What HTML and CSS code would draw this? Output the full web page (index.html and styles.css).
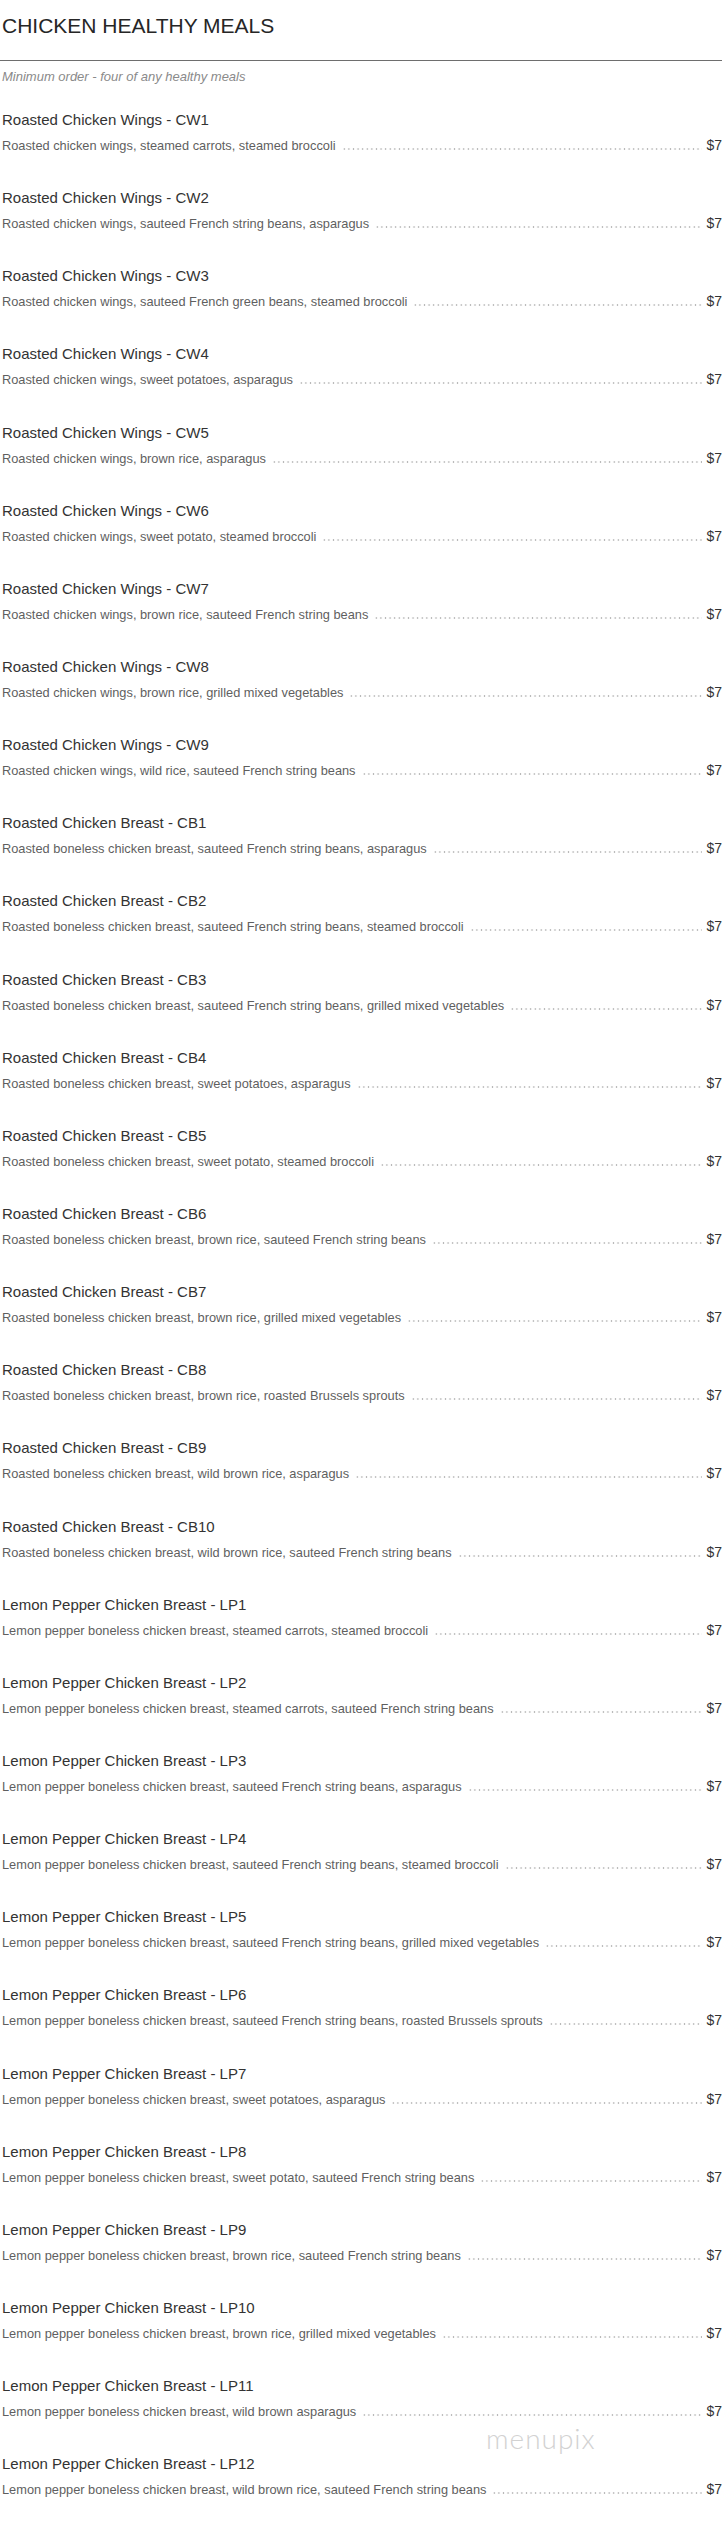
FILE: index.html
```html
<!DOCTYPE html>
<html>
<head>
<meta charset="utf-8">
<link rel="stylesheet" href="styles.css">
</head>
<body>
<div class="menu">
  <h1 class="menu-title">CHICKEN HEALTHY MEALS</h1>
  <hr class="rule">
  <p class="note">Minimum order - four of any healthy meals</p>
  <div class="items">
    <div class="item"><div class="name">Roasted Chicken Wings - CW1</div><div class="row"><span class="desc">Roasted chicken wings, steamed carrots, steamed broccoli</span><span class="dots"></span><span class="price">$7</span></div></div>
    <div class="item"><div class="name">Roasted Chicken Wings - CW2</div><div class="row"><span class="desc">Roasted chicken wings, sauteed French string beans, asparagus</span><span class="dots"></span><span class="price">$7</span></div></div>
    <div class="item"><div class="name">Roasted Chicken Wings - CW3</div><div class="row"><span class="desc">Roasted chicken wings, sauteed French green beans, steamed broccoli</span><span class="dots"></span><span class="price">$7</span></div></div>
    <div class="item"><div class="name">Roasted Chicken Wings - CW4</div><div class="row"><span class="desc">Roasted chicken wings, sweet potatoes, asparagus</span><span class="dots"></span><span class="price">$7</span></div></div>
    <div class="item"><div class="name">Roasted Chicken Wings - CW5</div><div class="row"><span class="desc">Roasted chicken wings, brown rice, asparagus</span><span class="dots"></span><span class="price">$7</span></div></div>
    <div class="item"><div class="name">Roasted Chicken Wings - CW6</div><div class="row"><span class="desc">Roasted chicken wings, sweet potato, steamed broccoli</span><span class="dots"></span><span class="price">$7</span></div></div>
    <div class="item"><div class="name">Roasted Chicken Wings - CW7</div><div class="row"><span class="desc">Roasted chicken wings, brown rice, sauteed French string beans</span><span class="dots"></span><span class="price">$7</span></div></div>
    <div class="item"><div class="name">Roasted Chicken Wings - CW8</div><div class="row"><span class="desc">Roasted chicken wings, brown rice, grilled mixed vegetables</span><span class="dots"></span><span class="price">$7</span></div></div>
    <div class="item"><div class="name">Roasted Chicken Wings - CW9</div><div class="row"><span class="desc">Roasted chicken wings, wild rice, sauteed French string beans</span><span class="dots"></span><span class="price">$7</span></div></div>
    <div class="item"><div class="name">Roasted Chicken Breast - CB1</div><div class="row"><span class="desc">Roasted boneless chicken breast, sauteed French string beans, asparagus</span><span class="dots"></span><span class="price">$7</span></div></div>
    <div class="item"><div class="name">Roasted Chicken Breast - CB2</div><div class="row"><span class="desc">Roasted boneless chicken breast, sauteed French string beans, steamed broccoli</span><span class="dots"></span><span class="price">$7</span></div></div>
    <div class="item"><div class="name">Roasted Chicken Breast - CB3</div><div class="row"><span class="desc">Roasted boneless chicken breast, sauteed French string beans, grilled mixed vegetables</span><span class="dots"></span><span class="price">$7</span></div></div>
    <div class="item"><div class="name">Roasted Chicken Breast - CB4</div><div class="row"><span class="desc">Roasted boneless chicken breast, sweet potatoes, asparagus</span><span class="dots"></span><span class="price">$7</span></div></div>
    <div class="item"><div class="name">Roasted Chicken Breast - CB5</div><div class="row"><span class="desc">Roasted boneless chicken breast, sweet potato, steamed broccoli</span><span class="dots"></span><span class="price">$7</span></div></div>
    <div class="item"><div class="name">Roasted Chicken Breast - CB6</div><div class="row"><span class="desc">Roasted boneless chicken breast, brown rice, sauteed French string beans</span><span class="dots"></span><span class="price">$7</span></div></div>
    <div class="item"><div class="name">Roasted Chicken Breast - CB7</div><div class="row"><span class="desc">Roasted boneless chicken breast, brown rice, grilled mixed vegetables</span><span class="dots"></span><span class="price">$7</span></div></div>
    <div class="item"><div class="name">Roasted Chicken Breast - CB8</div><div class="row"><span class="desc">Roasted boneless chicken breast, brown rice, roasted Brussels sprouts</span><span class="dots"></span><span class="price">$7</span></div></div>
    <div class="item"><div class="name">Roasted Chicken Breast - CB9</div><div class="row"><span class="desc">Roasted boneless chicken breast, wild brown rice, asparagus</span><span class="dots"></span><span class="price">$7</span></div></div>
    <div class="item"><div class="name">Roasted Chicken Breast - CB10</div><div class="row"><span class="desc">Roasted boneless chicken breast, wild brown rice, sauteed French string beans</span><span class="dots"></span><span class="price">$7</span></div></div>
    <div class="item"><div class="name">Lemon Pepper Chicken Breast - LP1</div><div class="row"><span class="desc">Lemon pepper boneless chicken breast, steamed carrots, steamed broccoli</span><span class="dots"></span><span class="price">$7</span></div></div>
    <div class="item"><div class="name">Lemon Pepper Chicken Breast - LP2</div><div class="row"><span class="desc">Lemon pepper boneless chicken breast, steamed carrots, sauteed French string beans</span><span class="dots"></span><span class="price">$7</span></div></div>
    <div class="item"><div class="name">Lemon Pepper Chicken Breast - LP3</div><div class="row"><span class="desc">Lemon pepper boneless chicken breast, sauteed French string beans, asparagus</span><span class="dots"></span><span class="price">$7</span></div></div>
    <div class="item"><div class="name">Lemon Pepper Chicken Breast - LP4</div><div class="row"><span class="desc">Lemon pepper boneless chicken breast, sauteed French string beans, steamed broccoli</span><span class="dots"></span><span class="price">$7</span></div></div>
    <div class="item"><div class="name">Lemon Pepper Chicken Breast - LP5</div><div class="row"><span class="desc">Lemon pepper boneless chicken breast, sauteed French string beans, grilled mixed vegetables</span><span class="dots"></span><span class="price">$7</span></div></div>
    <div class="item"><div class="name">Lemon Pepper Chicken Breast - LP6</div><div class="row"><span class="desc">Lemon pepper boneless chicken breast, sauteed French string beans, roasted Brussels sprouts</span><span class="dots"></span><span class="price">$7</span></div></div>
    <div class="item"><div class="name">Lemon Pepper Chicken Breast - LP7</div><div class="row"><span class="desc">Lemon pepper boneless chicken breast, sweet potatoes, asparagus</span><span class="dots"></span><span class="price">$7</span></div></div>
    <div class="item"><div class="name">Lemon Pepper Chicken Breast - LP8</div><div class="row"><span class="desc">Lemon pepper boneless chicken breast, sweet potato, sauteed French string beans</span><span class="dots"></span><span class="price">$7</span></div></div>
    <div class="item"><div class="name">Lemon Pepper Chicken Breast - LP9</div><div class="row"><span class="desc">Lemon pepper boneless chicken breast, brown rice, sauteed French string beans</span><span class="dots"></span><span class="price">$7</span></div></div>
    <div class="item"><div class="name">Lemon Pepper Chicken Breast - LP10</div><div class="row"><span class="desc">Lemon pepper boneless chicken breast, brown rice, grilled mixed vegetables</span><span class="dots"></span><span class="price">$7</span></div></div>
    <div class="item"><div class="name">Lemon Pepper Chicken Breast - LP11</div><div class="row"><span class="desc">Lemon pepper boneless chicken breast, wild brown asparagus</span><span class="dots"></span><span class="price">$7</span></div></div>
    <div class="item"><div class="name">Lemon Pepper Chicken Breast - LP12</div><div class="row"><span class="desc">Lemon pepper boneless chicken breast, wild brown rice, sauteed French string beans</span><span class="dots"></span><span class="price">$7</span></div></div>
  </div>
  <div class="watermark">menupix</div>
</div>
</body>
</html>
```

FILE: styles.css
```css
html, body {
  margin: 0;
  padding: 0;
  background: #ffffff;
}

.menu {
  position: relative;
  font-family: "Liberation Sans", Arial, Helvetica, sans-serif;
  padding: 0 0 0 2px;
}

.menu-title {
  margin: 14px 0 0 0;
  font-size: 21px;
  line-height: 24px;
  font-weight: normal;
  color: #262626;
}

.rule {
  margin: 22px 0 0 -2px;
  border: 0;
  height: 1px;
  background: #6e6e6e;
}

.note {
  margin: 8px 0 0 0;
  font-size: 13px;
  line-height: 16px;
  font-style: italic;
  color: #8a8a8a;
}

.items {
  margin-top: 26px;
  display: flex;
  flex-direction: column;
}

.item {
  height: 43px;
  margin-bottom: 35.15px;
  overflow: visible;
}

.name {
  height: 18px;
  font-size: 15px;
  line-height: 18px;
  color: #333333;
}

.row {
  height: 18px;
  margin-top: 7px;
  display: flex;
  align-items: baseline;
  line-height: 18px;
}

.desc {
  font-size: 12.8px;
  color: #5f5f5f;
  white-space: nowrap;
}

.dots {
  flex: 1;
  height: 2px;
  margin: 0 4px 0 6px;
  background-image: radial-gradient(circle, #b8b8b8 0.7px, transparent 1.1px);
  background-size: 4.6px 2px;
  background-repeat: repeat-x;
}

.price {
  font-size: 14px;
  color: #333333;
}

.watermark {
  position: absolute;
  left: 486px;
  top: 2407px;
  font-family: Lato, "Open Sans", sans-serif;
  font-weight: 300;
  font-size: 28px;
  letter-spacing: 1px;
  color: #d2d2d2;
}
```
